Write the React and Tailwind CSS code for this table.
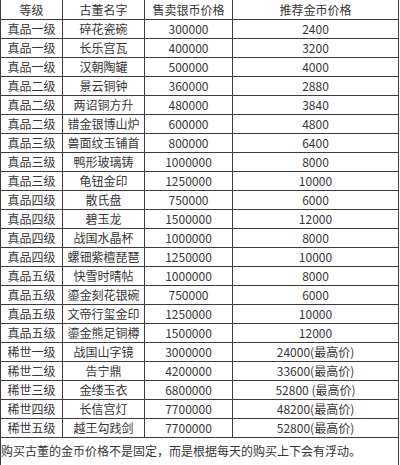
const rows = [
  ['真品一级', '碎花瓷碗', '300000', '2400'],
  ['真品一级', '长乐宫瓦', '400000', '3200'],
  ['真品一级', '汉朝陶罐', '500000', '4000'],
  ['真品二级', '景云铜钟', '360000', '2880'],
  ['真品二级', '两诏铜方升', '480000', '3840'],
  ['真品二级', '错金银博山炉', '600000', '4800'],
  ['真品三级', '兽面纹玉铺首', '800000', '6400'],
  ['真品三级', '鸭形玻璃铸', '1000000', '8000'],
  ['真品三级', '龟钮金印', '1250000', '10000'],
  ['真品四级', '散氏盘', '750000', '6000'],
  ['真品四级', '碧玉龙', '1500000', '12000'],
  ['真品四级', '战国水晶杯', '1000000', '8000'],
  ['真品四级', '螺钿紫檀琵琶', '1250000', '10000'],
  ['真品五级', '快雪时晴帖', '1000000', '8000'],
  ['真品五级', '鎏金刻花银碗', '750000', '6000'],
  ['真品五级', '文帝行玺金印', '1250000', '10000'],
  ['真品五级', '鎏金熊足铜樽', '1500000', '12000'],
  ['稀世一级', '战国山字镜', '3000000', '24000(最高价)'],
  ['稀世二级', '告宁鼎', '4200000', '33600(最高价)'],
  ['稀世三级', '金缕玉衣', '6800000', '52800 (最高价)'],
  ['稀世四级', '长信宫灯', '7700000', '48200(最高价)'],
  ['稀世五级', '越王勾践剑', '7700000', '52800(最高价)'],
];

function Row({ cells, header }) {
  return (
    <div className={`flex ${header ? 'h-[20px]' : 'h-[19px]'} border-b border-[#3c3c3c]`}>
      <div className="w-[62px] flex items-center justify-center border-r border-[#3c3c3c]">{cells[0]}</div>
      <div className="w-[82px] flex items-center justify-center border-r border-[#3c3c3c]">{cells[1]}</div>
      <div className="w-[88px] flex items-center justify-center border-r border-[#3c3c3c]">{cells[2]}</div>
      <div className="flex-1 flex items-center justify-center">{cells[3]}</div>
    </div>
  );
}

export default function App() {
  return (
    <div
      className="w-[400px] h-[465px] overflow-hidden bg-white text-[12px] leading-none text-[#363636]"
      style={{ fontFamily: '"Noto Sans CJK SC", "Noto Sans", sans-serif' }}
    >
      <div className="w-[399px] border-l border-r border-[#3c3c3c]">
        {/* Header */}
        <Row header cells={['等级', '古董名字', '售卖银币价格', '推荐金币价格']} />

        {/* Price rows */}
        {rows.map((r, i) => (
          <Row key={i} cells={r} />
        ))}

        {/* Note */}
        <div className="h-[30px] flex items-center pb-[4px]">
          购买古董的金币价格不是固定，而是根据每天的购买上下会有浮动。
        </div>
      </div>
    </div>
  );
}
